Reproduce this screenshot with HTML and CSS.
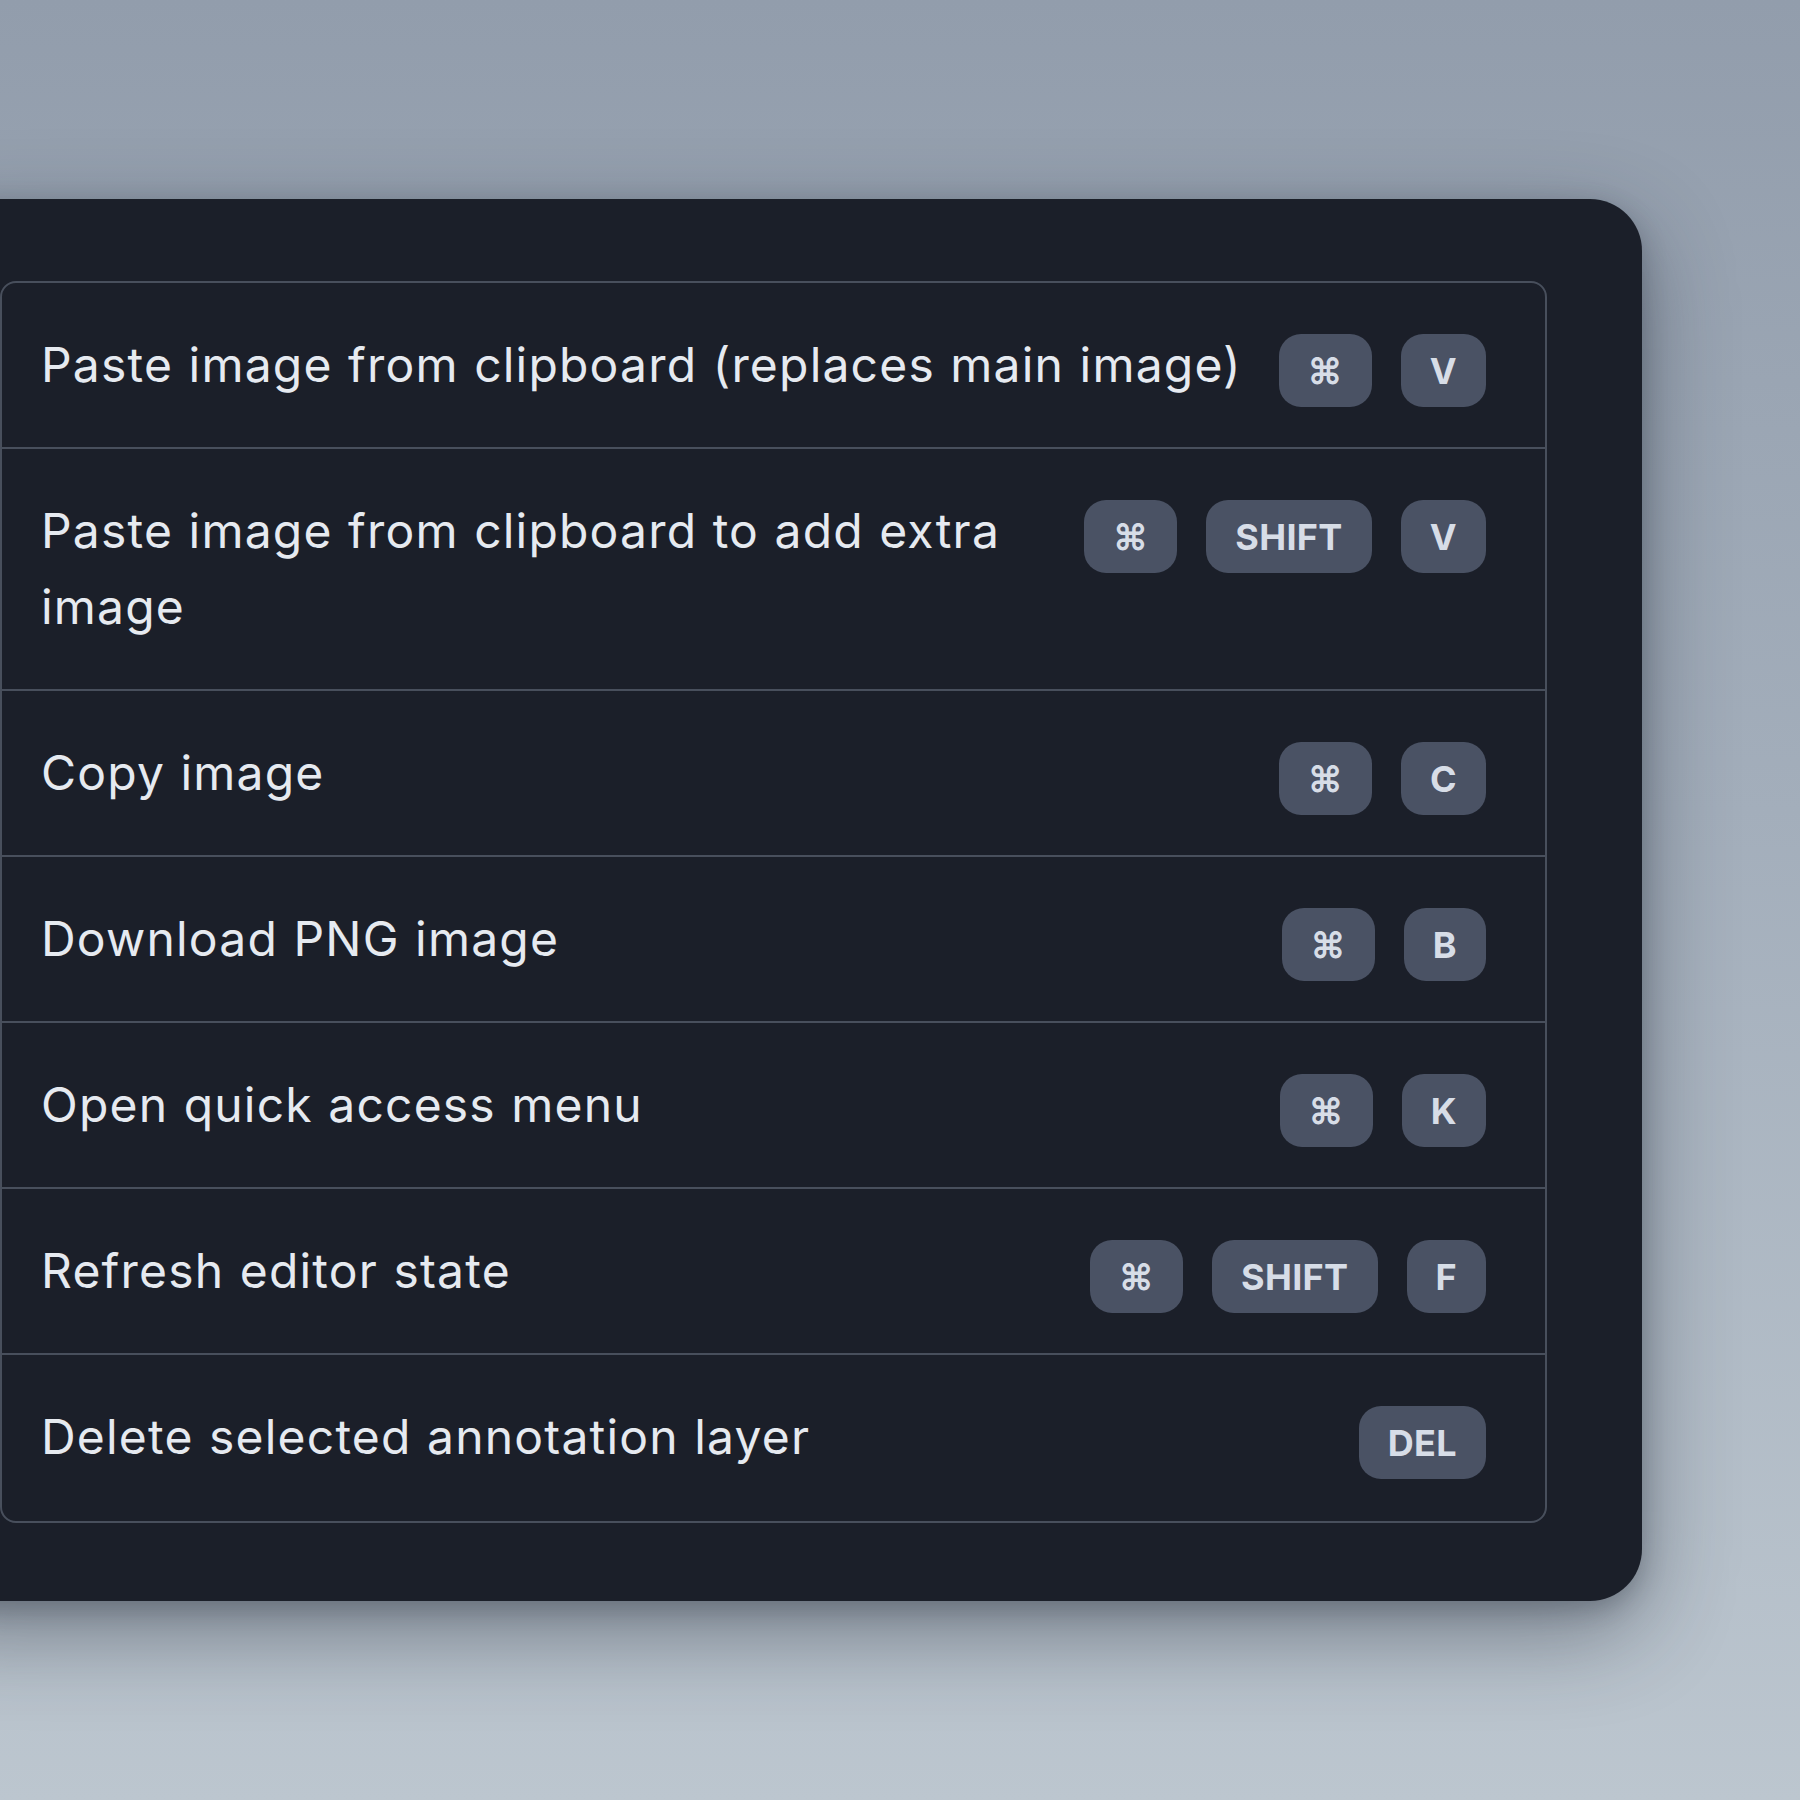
FILE: index.html
```html
<!DOCTYPE html>
<html lang="en">
<head>
<meta charset="utf-8">
<title>Keyboard shortcuts</title>
<link rel="stylesheet" href="styles.css">
</head>
<body>
<div class="stage">
  <section class="panel">
    <div class="list">
      <div class="row">
        <div class="label">Paste image from clipboard (replaces main image)</div>
        <div class="keys"><span class="key">⌘</span><span class="key">V</span></div>
      </div>
      <div class="row">
        <div class="label">Paste image from clipboard to add extra image</div>
        <div class="keys"><span class="key">⌘</span><span class="key">SHIFT</span><span class="key">V</span></div>
      </div>
      <div class="row">
        <div class="label">Copy image</div>
        <div class="keys"><span class="key">⌘</span><span class="key">C</span></div>
      </div>
      <div class="row">
        <div class="label">Download PNG image</div>
        <div class="keys"><span class="key">⌘</span><span class="key">B</span></div>
      </div>
      <div class="row">
        <div class="label">Open quick access menu</div>
        <div class="keys"><span class="key">⌘</span><span class="key">K</span></div>
      </div>
      <div class="row">
        <div class="label">Refresh editor state</div>
        <div class="keys"><span class="key">⌘</span><span class="key">SHIFT</span><span class="key">F</span></div>
      </div>
      <div class="row">
        <div class="label">Delete selected annotation layer</div>
        <div class="keys"><span class="key">DEL</span></div>
      </div>
    </div>
  </section>
</div>
</body>
</html>
```

FILE: styles.css
```css
html, body {
  margin: 0;
  padding: 0;
}
body {
  width: 1800px;
  height: 1800px;
  overflow: hidden;
  background: linear-gradient(180deg, #929dac 0%, #a3aebb 45%, #bcc6cf 100%);
  font-family: Inter, "Noto Sans", sans-serif;
}
.stage {
  padding-top: 199px;
}
.panel {
  width: 1737px;
  margin-left: -95px;
  box-sizing: border-box;
  padding: 82px 95px 78px 95px;
  background: #1b1f29;
  border-radius: 52px;
  box-shadow: 0 30px 90px rgba(30, 38, 52, 0.45), 0 8px 24px rgba(30, 38, 52, 0.25);
}
.list {
  border: 2px solid #484f5c;
  border-radius: 16px;
  padding-bottom: 2px;
}
.row {
  display: flex;
  align-items: flex-start;
  gap: 28px;
  padding: 44px 59px 44px 39px;
  border-top: 2px solid #484f5c;
}
.row:first-child {
  border-top: 0;
}
.label {
  flex: 1 1 auto;
  min-width: 0;
  font-size: 48px;
  line-height: 76px;
  color: #e6eaf0;
  letter-spacing: 0.025em;
  word-spacing: 0.015em;
}
.keys {
  flex: 0 0 auto;
  display: flex;
  gap: 29px;
  margin-top: 7px;
  margin-bottom: -4px;
}
.key {
  display: inline-flex;
  align-items: center;
  justify-content: center;
  height: 73px;
  padding: 0 29px;
  box-sizing: border-box;
  background: #4a5264;
  border-radius: 22px;
  color: #d7dde7;
  font-size: 36px;
  font-weight: 700;
  letter-spacing: 0.01em;
}
```
